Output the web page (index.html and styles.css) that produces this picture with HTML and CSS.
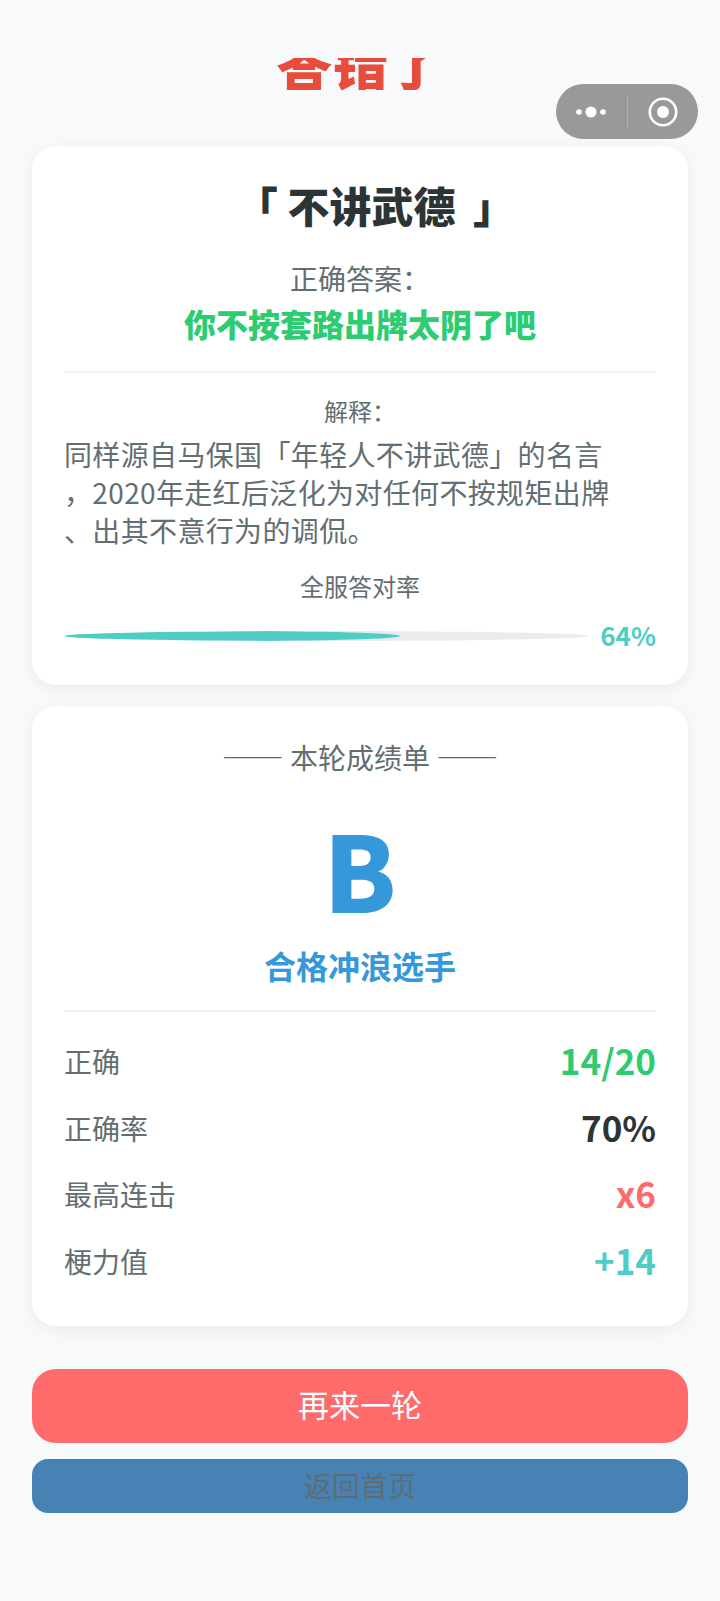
FILE: index.html
```html
<!DOCTYPE html>
<html lang="zh-CN">
<head>
<meta charset="utf-8">
<title>答错了</title>
<link rel="stylesheet" href="styles.css">
</head>
<body>
<div class="page">
  <div class="verdict"><span class="verdict-text">答错了</span></div>
  <div class="capsule" aria-hidden="true">
    <svg class="capsule-dots" width="32" height="12" viewBox="0 0 32 12"><circle cx="4" cy="6" r="2.8" fill="#fff"/><circle cx="16" cy="6" r="5.6" fill="#fff"/><circle cx="28" cy="6" r="2.8" fill="#fff"/></svg>
    <span class="capsule-line"></span>
    <svg class="capsule-target" width="32" height="32" viewBox="0 0 32 32"><circle cx="16" cy="16" r="13.2" fill="none" stroke="#fff" stroke-width="2.6"/><circle cx="16" cy="16" r="6" fill="#fff"/></svg>
  </div>

  <section class="card card-answer">
    <h1 class="word">「 不讲武德 <span class="word-end">」</span></h1>
    <p class="answer-label">正确答案：</p>
    <p class="answer">你不按套路出牌太阴了吧</p>
    <div class="rule"></div>
    <p class="explain-label">解释：</p>
    <p class="explain">同样源自马保国「年轻人不讲武德」的名言<br>，2020年走红后泛化为对任何不按规矩出牌<br>、出其不意行为的调侃。</p>
    <p class="rate-label">全服答对率</p>
    <div class="rate">
      <div class="track"><div class="fill"></div></div>
      <span class="pct">64%</span>
    </div>
  </section>

  <section class="card card-score">
    <p class="score-head"><span class="dash">——</span> 本轮成绩单 <span class="dash">——</span></p>
    <div class="grade">B</div>
    <p class="grade-name">合格冲浪选手</p>
    <div class="rule rule-score"></div>
    <div class="stat"><span class="stat-label">正确</span><span class="stat-value green">14/20</span></div>
    <div class="stat"><span class="stat-label">正确率</span><span class="stat-value dark">70%</span></div>
    <div class="stat"><span class="stat-label">最高连击</span><span class="stat-value red">x6</span></div>
    <div class="stat"><span class="stat-label">梗力值</span><span class="stat-value teal">+14</span></div>
  </section>

  <div class="actions">
    <button class="btn btn-primary">再来一轮</button>
    <button class="btn btn-secondary">返回首页</button>
  </div>
</div>
</body>
</html>
```
FILE: styles.css
```css
* { box-sizing: border-box; margin: 0; padding: 0; }
html, body { background: #f8f9fa; }
body { font-family: "Noto Sans CJK SC", "Noto Sans", sans-serif; color: #636e72; }
.page { position: relative; width: 720px; height: 1601px; padding: 58px 32px 0; overflow: hidden; }

.verdict { height: 32px; overflow: hidden; position: relative; text-align: center; margin-bottom: 56px; }
.verdict-text { position: absolute; left: 0; right: 0; bottom: -1px; font-size: 56px; line-height: 60px; font-weight: 900; color: #e74c3c; }

.capsule { position: absolute; top: 84px; left: 556px; width: 142px; height: 55px; border-radius: 28px; background: #999; display: flex; align-items: center; }
.capsule-dots { margin-left: 19px; }
.capsule-line { width: 1px; height: 34px; background: #aeaeae; margin-left: 20px; }
.capsule-target { margin-left: 19px; }

.card { background: #fff; border-radius: 24px; box-shadow: 0 4px 16px rgba(0,0,0,.06); padding: 32px; }
.card-answer { height: 539px; margin-bottom: 21px; text-align: center; }
.card-score { height: 620px; margin-bottom: 43px; text-align: center; }

.word { font-size: 42px; line-height: 60px; font-weight: 900; color: #2d3436; margin-top: -3px; padding-left: 31px; }
.word-end { margin-left: 8px; }
.answer-label { font-size: 28px; line-height: 42px; margin-top: 22px; }
.answer { font-size: 32px; line-height: 48px; font-weight: 900; color: #2ecc71; }
.rule { height: 2px; background: #f1f2f3; }
.card-answer .rule { margin-top: 24px; }
.explain-label { font-size: 24px; line-height: 36px; margin-top: 20px; }
.explain { font-size: 28px; line-height: 38px; text-align: left; margin-top: 6px; letter-spacing: .35px; }
.rate-label { font-size: 24px; line-height: 36px; margin-top: 19px; }
.rate { display: flex; align-items: center; gap: 11px; margin-top: 13px; }
.track { flex: 1; height: 10px; border-radius: 50%; background: #e9ecef; overflow: hidden; }
.fill { width: 64%; height: 100%; border-radius: 50%; background: #4ecdc4; }
.pct { font-size: 26px; line-height: 36px; font-weight: 700; color: #4ecdc4; padding-bottom: 2px; }

.score-head { font-size: 28px; line-height: 42px; margin-top: -3px; }
.dash { font-size: 31px; }
.grade { font-size: 105px; line-height: 120px; font-weight: 900; color: #3498db; margin-top: 29px; }
.grade-name { font-size: 32px; line-height: 48px; font-weight: 700; color: #3498db; margin-top: 14px; }
.rule-score { margin-top: 21px; }
.stat { display: flex; justify-content: space-between; align-items: center; height: 66.5px; }
.rule-score + .stat { margin-top: 16px; }
.stat-label { font-size: 28px; }
.stat-value { font-size: 35px; font-weight: 700; padding-bottom: 3px; }
.green { color: #2ecc71; }
.dark { color: #2d3436; }
.red { color: #ff6b6b; }
.teal { color: #4ecdc4; }

.actions { display: flex; flex-direction: column; gap: 16px; }
.btn { display: block; width: 100%; border: 0; font-family: inherit; }
.btn-primary { height: 74px; border-radius: 24px; background: #ff6b6b; color: #fff; font-size: 31px; padding-bottom: 5px; }
.btn-secondary { height: 54px; border-radius: 16px; background: #4682b4; color: #5f6b75; font-size: 28px; padding-bottom: 2px; }
```
